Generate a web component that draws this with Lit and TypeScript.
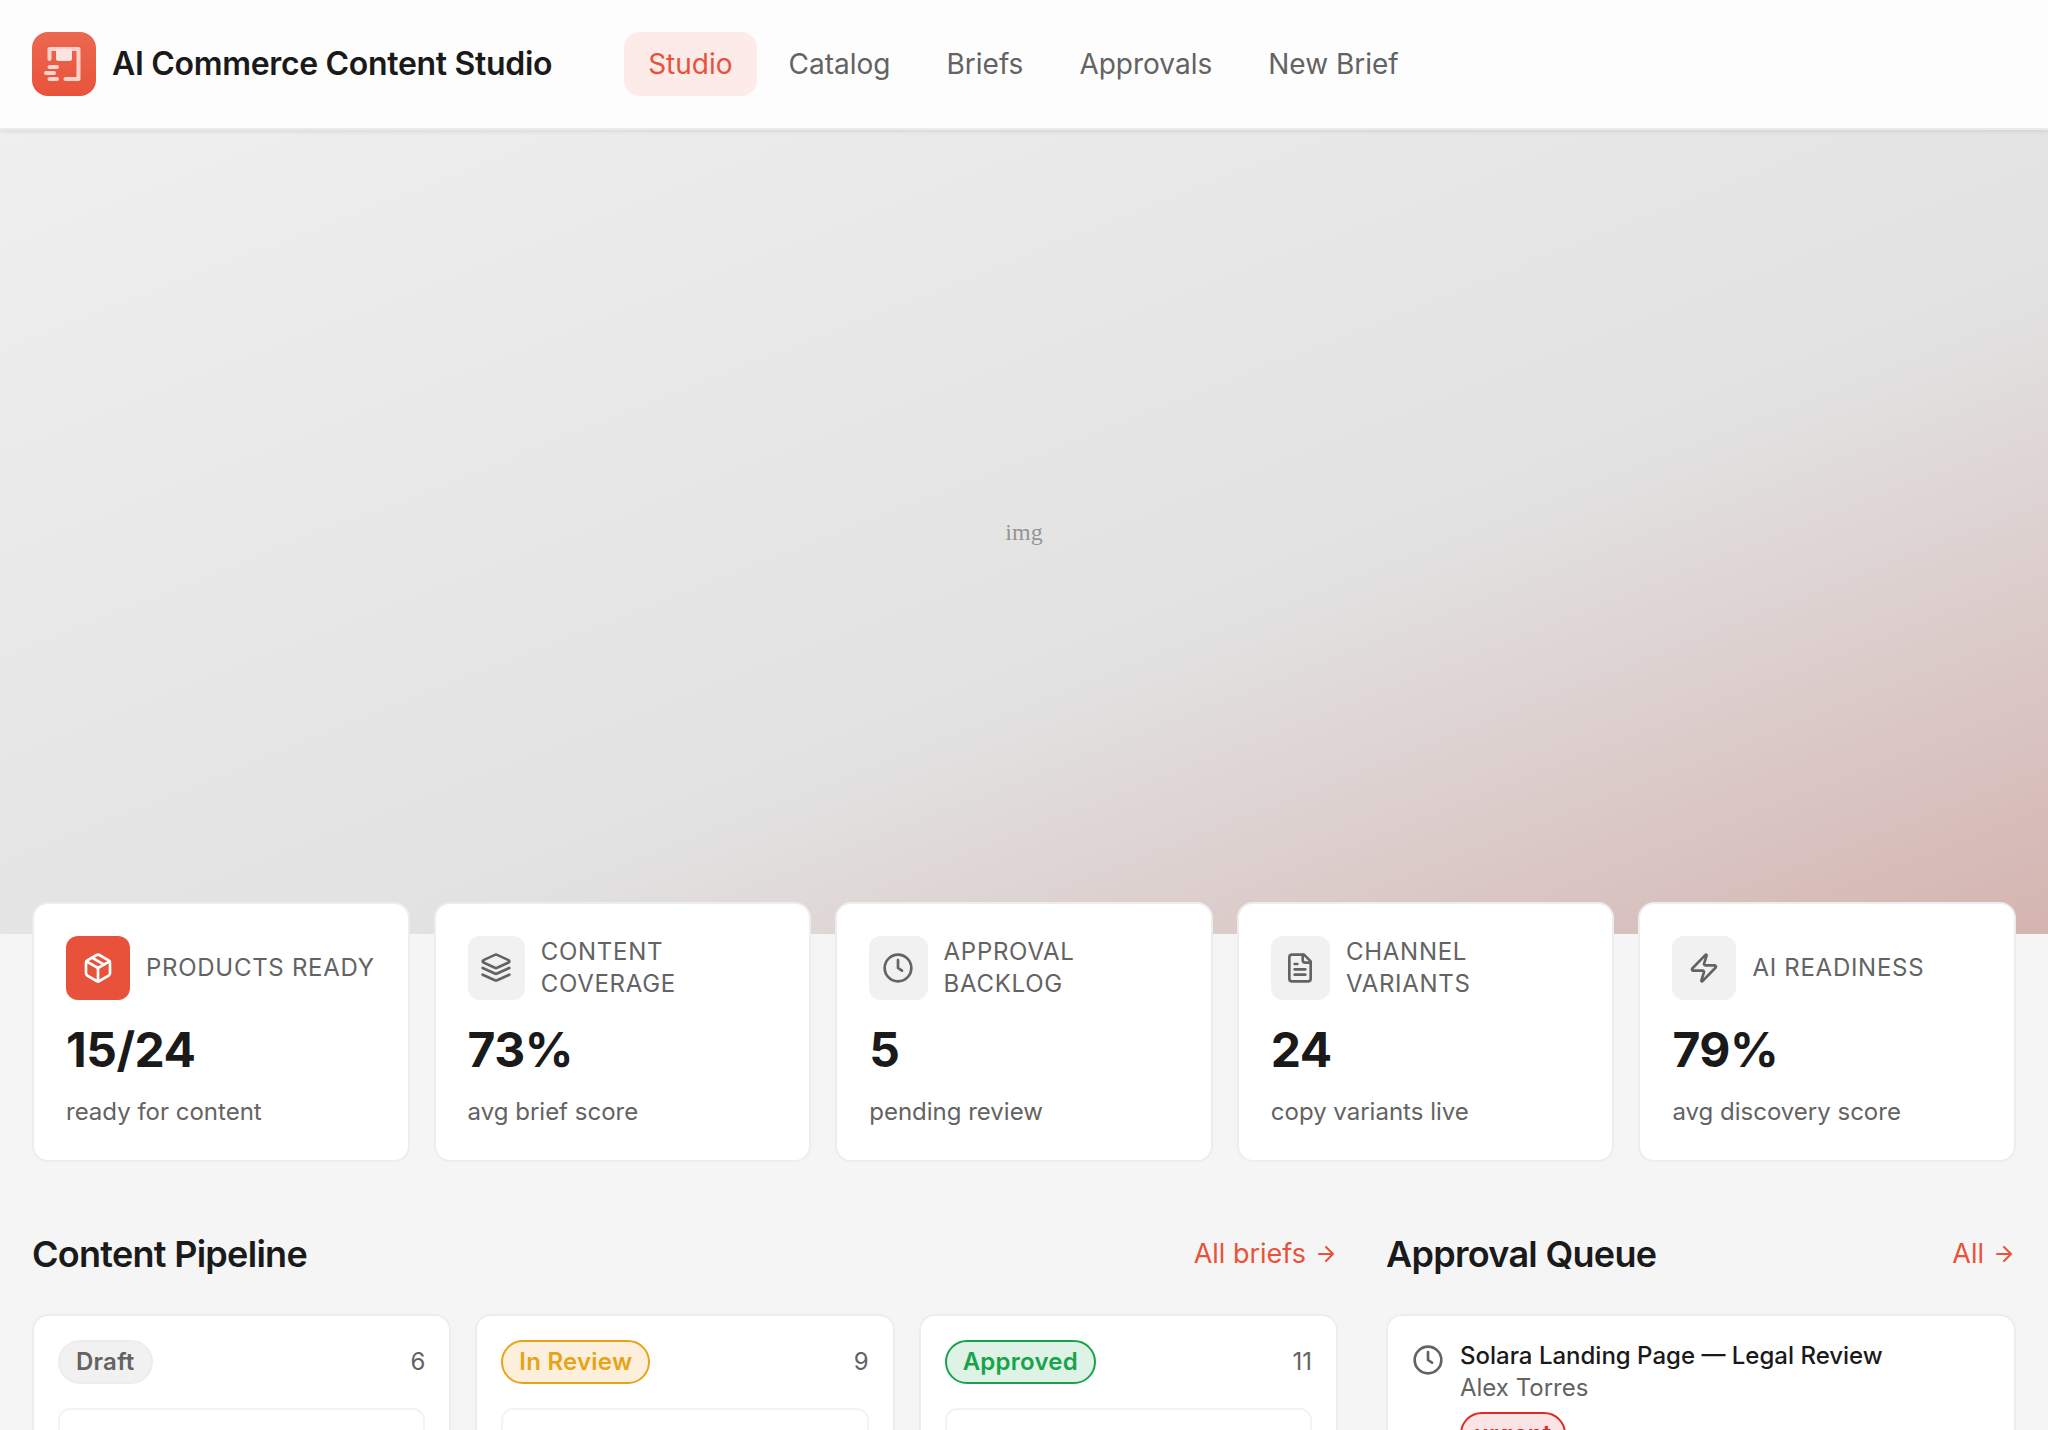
import { LitElement, html, css, svg } from "lit";
import { customElement } from "lit/decorators.js";

const icons = {
  box: svg`<path d="M21 8a2 2 0 0 0-1-1.73l-7-4a2 2 0 0 0-2 0l-7 4A2 2 0 0 0 3 8v8a2 2 0 0 0 1 1.73l7 4a2 2 0 0 0 2 0l7-4A2 2 0 0 0 21 16Z"/><path d="m7.5 4.27 9 5.15"/><path d="m3.3 7 8.7 5 8.7-5"/><path d="M12 22V12"/>`,
  layers: svg`<path d="m12.83 2.18a2 2 0 0 0-1.66 0L2.6 6.08a1 1 0 0 0 0 1.83l8.58 3.91a2 2 0 0 0 1.66 0l8.58-3.9a1 1 0 0 0 0-1.83Z"/><path d="m22 12-9.17 4.16a2 2 0 0 1-1.66 0L2 12"/><path d="m22 17-9.17 4.16a2 2 0 0 1-1.66 0L2 17"/>`,
  clock: svg`<circle cx="12" cy="12" r="10"/><path d="M12 6v6l3 2"/>`,
  file: svg`<path d="M15 2H6a2 2 0 0 0-2 2v16a2 2 0 0 0 2 2h12a2 2 0 0 0 2-2V7Z"/><path d="M14 2v4a2 2 0 0 0 2 2h4"/><path d="M10 9H8"/><path d="M16 13H8"/><path d="M16 17H8"/>`,
  zap: svg`<path d="M4 14a1 1 0 0 1-.78-1.63l9.9-10.2a.5.5 0 0 1 .86.46l-1.92 6.02A1 1 0 0 0 13 10h7a1 1 0 0 1 .78 1.63l-9.9 10.2a.5.5 0 0 1-.86-.46l1.92-6.02A1 1 0 0 0 11 14z"/>`,
};

type IconName = keyof typeof icons;

const icon = (name: IconName) => html`
  <svg class="icon" viewBox="0 0 24 24" aria-hidden="true">${icons[name]}</svg>
`;

const navItems = ["Studio", "Catalog", "Briefs", "Approvals", "New Brief"];

const stats: { icon: IconName; label: string; value: string; note: string; accent?: boolean }[] = [
  { icon: "box", label: "Products ready", value: "15/24", note: "ready for content", accent: true },
  { icon: "layers", label: "Content coverage", value: "73%", note: "avg brief score" },
  { icon: "clock", label: "Approval backlog", value: "5", note: "pending review" },
  { icon: "file", label: "Channel variants", value: "24", note: "copy variants live" },
  { icon: "zap", label: "AI readiness", value: "79%", note: "avg discovery score" },
];

const columns = [
  { name: "Draft", tone: "neutral", count: 6 },
  { name: "In Review", tone: "warning", count: 9 },
  { name: "Approved", tone: "success", count: 11 },
];

@customElement("app-root")
export class AppRoot extends LitElement {
  static styles = css`
    :host {
      display: block;
      height: 100vh;
      overflow: hidden;
      background: #f5f5f5;
      color: #1a1a1a;
      font-family: Inter, "Liberation Sans", sans-serif;
      font-size: 24px;
      line-height: 32px;
    }
    *, *::before, *::after { box-sizing: border-box; }
    h1, h2, p { margin: 0; }
    a { color: inherit; text-decoration: none; }

    .header {
      position: relative;
      display: flex;
      align-items: center;
      gap: 72px;
      padding: 32px;
      background: #fdfdfd;
      border-bottom: 2px solid #ebebeb;
      box-shadow: 0 2px 4px rgba(0, 0, 0, 0.08);
    }
    .brand { display: flex; align-items: center; gap: 16px; }
    .logo { display: block; width: 64px; height: 64px; }
    .brand-name { font-size: 32px; line-height: 40px; font-weight: 600; letter-spacing: -0.01em; }
    .nav { display: flex; gap: 8px; }
    .nav-link {
      padding: 12px 24px;
      border-radius: 16px;
      color: #636363;
      font-size: 28px;
      line-height: 40px;
    }
    .nav-link.active { background: #fcebe8; color: #e9523a; }

    .hero {
      display: flex;
      align-items: center;
      justify-content: center;
      height: 804px;
      background: linear-gradient(to bottom right, #efefef, #e2e2e2 60%, #d4b4b0);
      color: #949494;
      font-family: "Liberation Serif", serif;
      font-size: 24px;
    }

    .content { position: relative; padding: 0 32px; margin-top: -32px; }
    .stats { display: grid; grid-template-columns: repeat(5, minmax(0, 1fr)); gap: 24px; }
    .card { background: #fff; border: 2px solid #ededed; border-radius: 16px; }
    .stat { padding: 32px; }
    .stat-head { display: flex; align-items: center; gap: 16px; }
    .stat-icon {
      display: flex;
      align-items: center;
      justify-content: center;
      width: 64px;
      height: 64px;
      border-radius: 12px;
      background: #f1f1f1;
      color: #636363;
    }
    .stat-icon.accent { background: #e9523a; color: #fff; }
    .icon {
      flex: none;
      width: 32px;
      height: 32px;
      fill: none;
      stroke: currentColor;
      stroke-width: 2;
      stroke-linecap: round;
      stroke-linejoin: round;
    }
    .stat-label { color: #636363; letter-spacing: 0.03em; text-transform: uppercase; }
    .stat-value { margin-top: 20px; font-size: 48px; line-height: 60px; font-weight: 700; letter-spacing: -0.01em; }
    .stat-note { margin-top: 16px; color: #636363; }

    .boards {
      display: grid;
      grid-template-columns: minmax(0, 1306fr) minmax(0, 630fr);
      gap: 48px;
      margin-top: 64px;
    }
    .section-head { display: flex; align-items: center; justify-content: space-between; margin-bottom: 32px; }
    .section-title { font-size: 36px; line-height: 56px; font-weight: 600; letter-spacing: -0.02em; }
    .more { display: flex; align-items: center; gap: 8px; color: #e9523a; font-size: 27px; line-height: 40px; }
    .arrow { width: 24px; height: 24px; fill: none; stroke: currentColor; stroke-width: 2; stroke-linecap: round; stroke-linejoin: round; }
    .columns { display: grid; grid-template-columns: repeat(3, minmax(0, 1fr)); gap: 24px; }
    .column { padding: 24px; height: 400px; }
    .column-head { display: flex; align-items: center; justify-content: space-between; color: #636363; }
    .badge {
      display: inline-block;
      padding: 4px 16px;
      border: 2px solid;
      border-radius: 22px;
      font-weight: 600;
      letter-spacing: 0.01em;
    }
    .badge.neutral { background: #f1f1f1; border-color: #ededed; color: #636363; }
    .badge.warning { background: #fcf0dc; border-color: #e8a317; color: #e8a317; }
    .badge.success { background: #dff2e6; border-color: #18a34a; color: #18a34a; }
    .badge.danger { padding: 4px 12px; background: #fbe5e4; border-color: #dc2b26; color: #dc2b26; }
    .brief { margin-top: 24px; height: 200px; border: 2px solid #f3f3f3; border-radius: 12px; background: #fff; }

    .queue { padding: 24px; height: 400px; }
    .queue-item { display: flex; gap: 16px; color: #636363; }
    .queue-item .icon { margin-top: 4px; }
    .queue-title { color: #1a1a1a; font-weight: 500; }
    .queue-item .badge { margin-top: 8px; }
  `;

  private more(label: string) {
    return html`
      <a class="more" href="#">
        ${label}
        <svg class="arrow" viewBox="0 0 24 24" aria-hidden="true"><path d="M5 12h14M12 5l7 7-7 7"/></svg>
      </a>
    `;
  }

  render() {
    return html`
      <header class="header">
        <div class="brand">
          <svg class="logo" viewBox="0 0 64 64" aria-hidden="true">
            <defs>
              <linearGradient id="tile" x1="0" y1="0" x2="0" y2="1">
                <stop offset="0" stop-color="#ec6850"/>
                <stop offset="1" stop-color="#e9523a"/>
              </linearGradient>
            </defs>
            <rect width="64" height="64" rx="16" fill="url(#tile)"/>
            <g fill="none" stroke="#fbd3cc" stroke-width="4" stroke-linecap="round" stroke-linejoin="round">
              <path d="M17.500 27V17H46.500V47H33.500"/>
              <path d="M17.500 35H25M14 41H22M17.500 47H25"/>
            </g>
            <path d="M24 17H40V26.500Q40 29 37.500 29H26.500Q24 29 24 26.500Z" fill="#fbe3df"/>
          </svg>
          <h1 class="brand-name">AI Commerce Content Studio</h1>
        </div>
        <nav class="nav">
          ${navItems.map((item, i) => html`<a class="nav-link ${i === 0 ? "active" : ""}" href="#">${item}</a>`)}
        </nav>
      </header>
      <div class="hero">img</div>
      <main class="content">
        <section class="stats">
          ${stats.map((s) => html`
            <article class="card stat">
              <div class="stat-head">
                <span class="stat-icon ${s.accent ? "accent" : ""}">${icon(s.icon)}</span>
                <span class="stat-label">${s.label}</span>
              </div>
              <p class="stat-value">${s.value}</p>
              <p class="stat-note">${s.note}</p>
            </article>
          `)}
        </section>
        <div class="boards">
          <section>
            <div class="section-head">
              <h2 class="section-title">Content Pipeline</h2>
              ${this.more("All briefs")}
            </div>
            <div class="columns">
              ${columns.map((c) => html`
                <div class="card column">
                  <div class="column-head">
                    <span class="badge ${c.tone}">${c.name}</span>
                    <span>${c.count}</span>
                  </div>
                  <div class="brief"></div>
                </div>
              `)}
            </div>
          </section>
          <section>
            <div class="section-head">
              <h2 class="section-title">Approval Queue</h2>
              ${this.more("All")}
            </div>
            <div class="card queue">
              <div class="queue-item">
                ${icon("clock")}
                <div>
                  <p class="queue-title">Solara Landing Page — Legal Review</p>
                  <p>Alex Torres</p>
                  <span class="badge danger">urgent</span>
                </div>
              </div>
            </div>
          </section>
        </div>
      </main>
    `;
  }
}
